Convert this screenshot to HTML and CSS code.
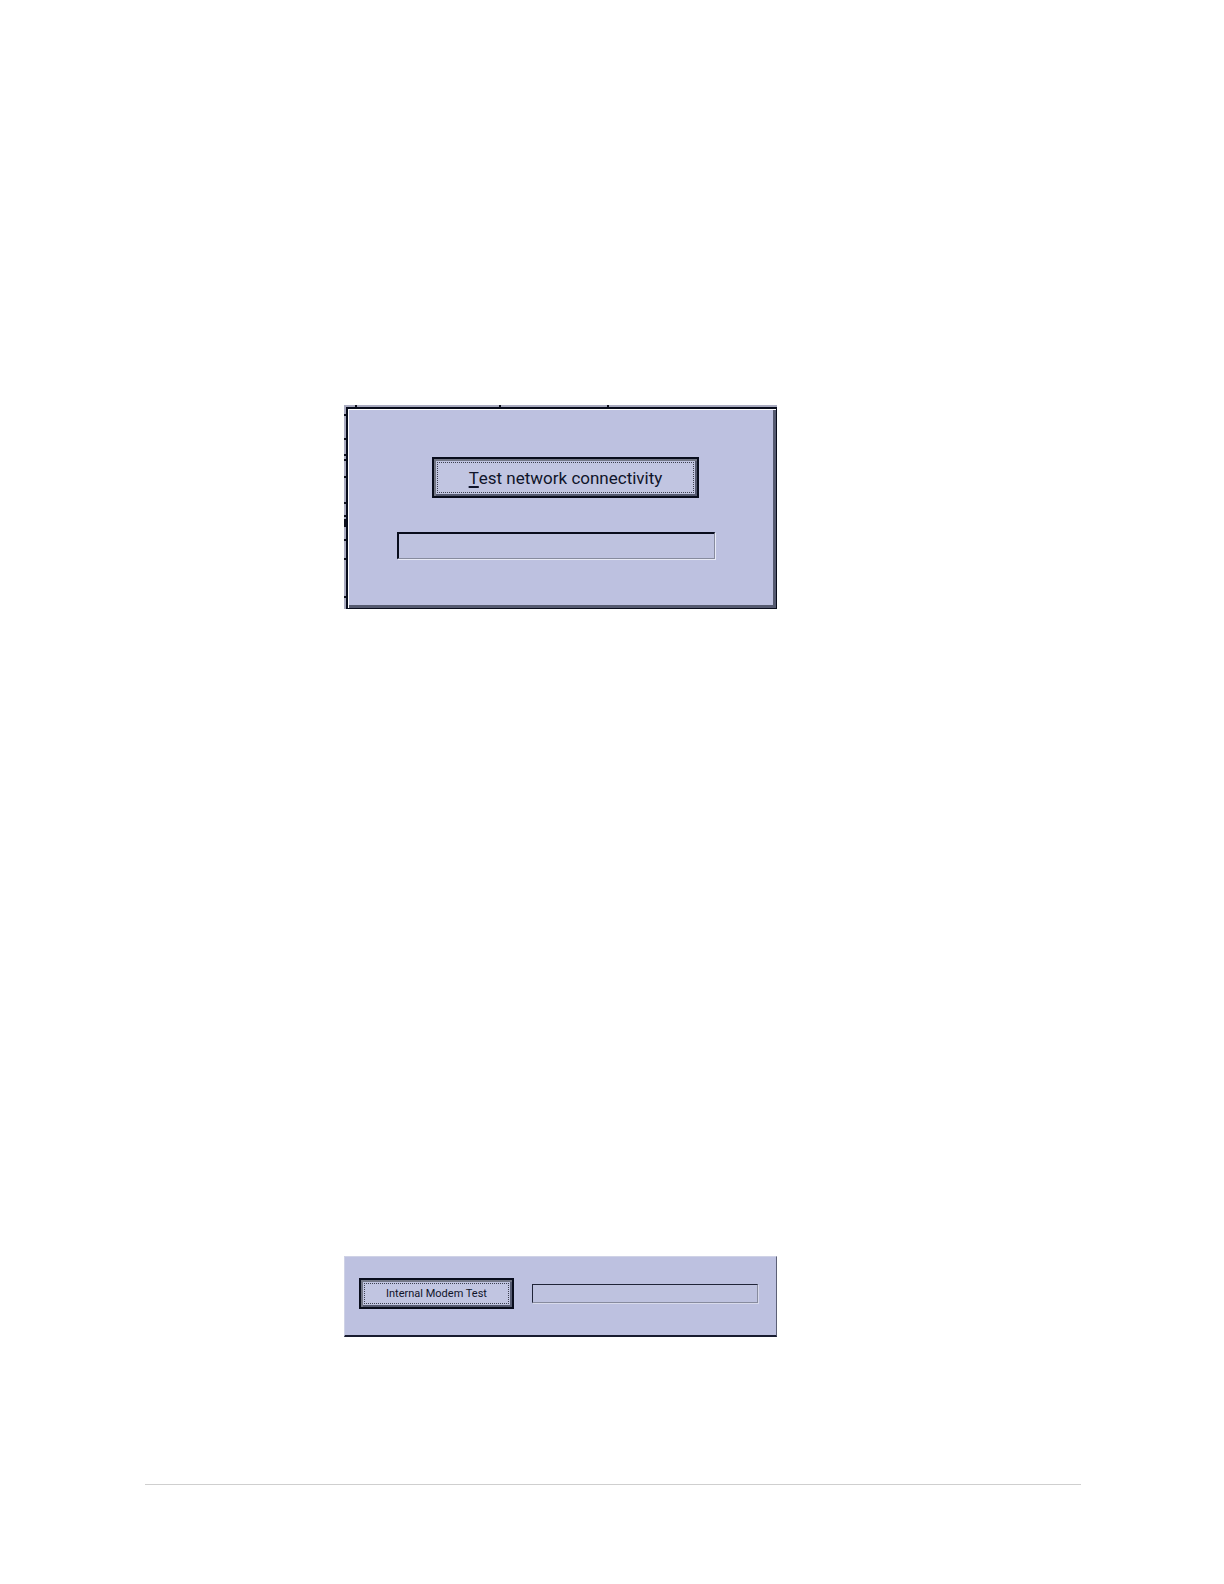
FILE: index.html
```
<!DOCTYPE html>
<html lang="en">
<head>
    <meta charset="UTF-8">
    <title>Network and Modem Test</title>
    <meta name="viewport" content="width=device-width, initial-scale=1.0">
    <link rel="stylesheet" href="styles.css">
</head>
<body>
    <main class="page">
        <section class="network-frame">
            <!-- edge of the window behind the dialog -->
            <svg class="backdrop" width="433" height="204" aria-hidden="true">
                <path fill="#a9abc0" d="M0 0h433v2H2v202H0z"/>
                <path fill="#10121f" d="M11 0h2v2h-2zM155 0h2v2h-2zM263 0h2v2h-2zM0 9h2v2H0zM0 33h2v2H0zM0 49h2v2H0zM0 54h2v2H0zM0 71h2v2H0zM0 97h2v2H0zM0 110h2v2H0zM0 114h2v8H0zM0 134h2v2H0zM0 153h2v2H0zM0 191h2v2H0z"/>
            </svg>
            <div class="network-dialog">
                <button type="button" class="network-btn" accesskey="t"><span><u>T</u>est network connectivity</span></button>
                <input type="text" class="status network-status" aria-label="Network test status" readonly>
            </div>
        </section>
        <section class="modem-panel">
            <button type="button" class="modem-btn"><span>Internal Modem Test</span></button>
            <input type="text" class="status modem-status" aria-label="Modem test status" readonly>
        </section>
        <hr class="page-rule">
    </main>
</body>
</html>
```
FILE: styles.css
```
:root {
    --panel: #bdc1e0;
    --ink: #10142a;
    --edge: #080c1c;
    --shadow: #555a70;
    --light: #e8eaf6;
}
* {
    box-sizing: border-box;
}
body {
    margin: 0;
    background: #fff;
    color: var(--ink);
    font-family: Roboto, "Noto Sans", sans-serif;
}
.page {
    padding: 405px 143px 98px 145px;
}
.network-frame,
.modem-panel {
    max-width: 433px;
    margin-left: 199px;
}
.network-frame {
    position: relative;
    padding: 2px 0 0 2px;
}
.backdrop {
    position: absolute;
    top: 0;
    left: 0;
}
.network-dialog {
    position: relative;
    display: flex;
    flex-direction: column;
    align-items: flex-start;
    gap: 34px;
    padding: 48px 61px 49px 49px;
    background: var(--panel);
    border: 2px solid var(--edge);
    border-right-width: 1px;
    border-bottom-width: 1px;
    box-shadow: inset 1px 1px #fff, inset -3px -3px var(--shadow);
}
button {
    padding: 3px;
    background: #c1c5e1;
    color: var(--ink);
    font-family: inherit;
    border: 2px solid var(--edge);
    box-shadow: inset 2px 2px #737786, inset -2px -2px var(--shadow);
}
button span {
    display: flex;
    align-items: center;
    justify-content: center;
    height: 100%;
    border: 1px dotted #3c4050;
}
button u {
    text-decoration-thickness: 2px;
    text-underline-offset: 2px;
}
.network-btn {
    width: 267px;
    height: 41px;
    margin-left: 35px;
    font-size: 17px;
}
.status {
    min-width: 0;
    padding: 0 4px;
    background: #bec2df;
    border: 1px solid #878b9e;
    outline: none;
}
.network-status {
    width: 100%;
    height: 27px;
    border-top: 2px solid var(--edge);
    border-left: 2px solid var(--edge);
    box-shadow: 1px 1px var(--light);
}
.modem-panel {
    display: flex;
    align-items: center;
    gap: 18px;
    margin-top: 647px;
    padding: 21px 18px 26px 14px;
    background: var(--panel);
    border: 1px solid #cfd2e6;
    border-right-color: #5c6076;
    border-bottom: 2px solid #181c30;
}
.modem-btn {
    width: 155px;
    height: 31px;
    font-size: 11px;
}
.modem-status {
    flex: 1;
    height: 19px;
    border-top-color: #202438;
    border-left-color: #202438;
    box-shadow: 1px 1px #d8daeb;
}
.page-rule {
    height: 1px;
    margin: 147px 0 0;
    border: 0;
    background: #cfcfcf;
}
```
